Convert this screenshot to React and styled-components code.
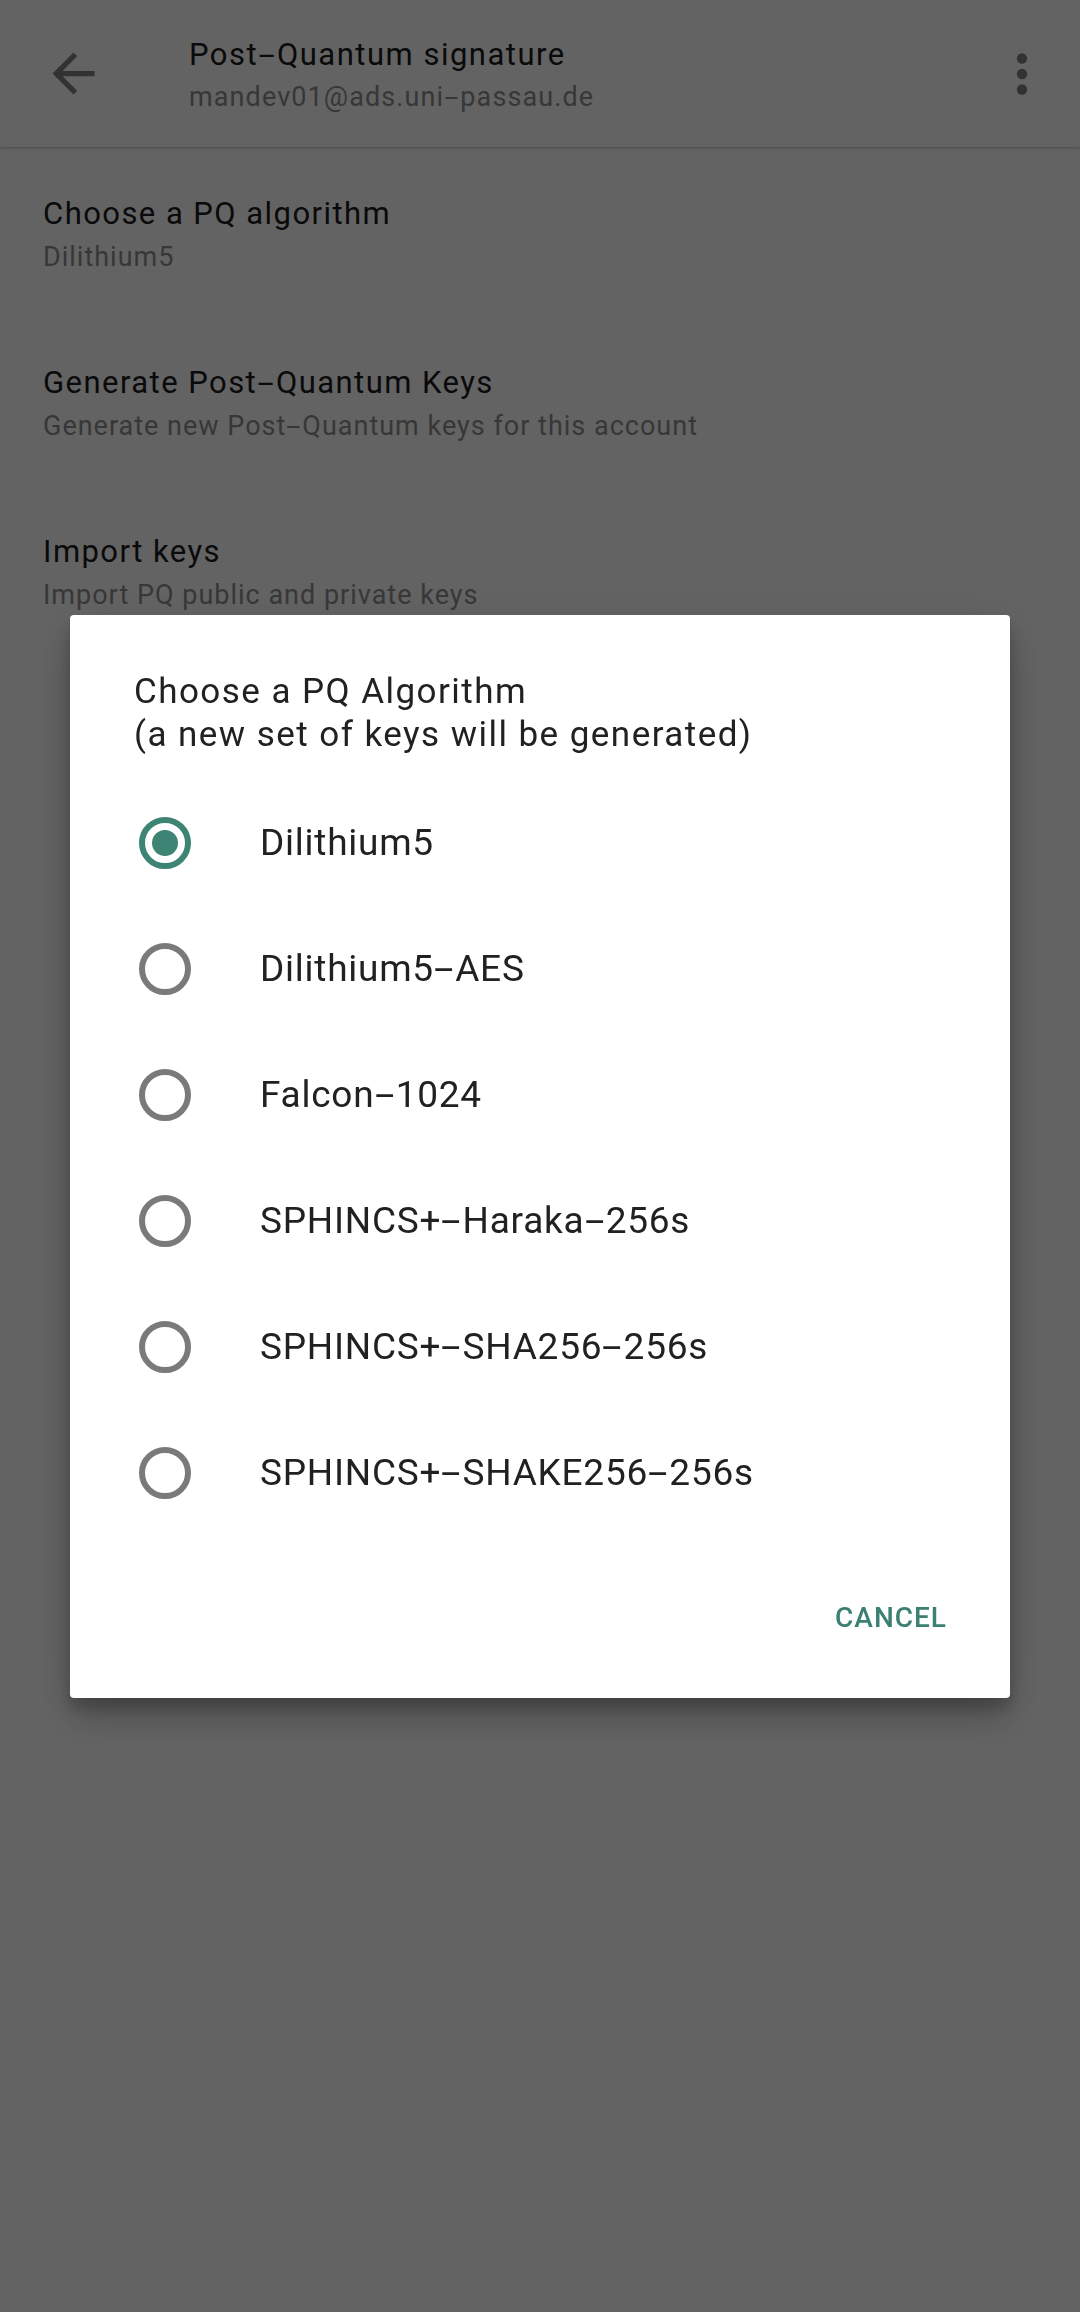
import React from "react";
import styled, { createGlobalStyle } from "styled-components";

const GlobalStyle = createGlobalStyle`
  html, body {
    margin: 0;
    padding: 0;
    background: #ffffff;
    font-family: Roboto, "Noto Sans", sans-serif;
  }
`;

const algorithms = [
  "Dilithium5",
  "Dilithium5-AES",
  "Falcon-1024",
  "SPHINCS+-Haraka-256s",
  "SPHINCS+-SHA256-256s",
  "SPHINCS+-SHAKE256-256s",
];

const settings = [
  { title: "Choose a PQ algorithm", summary: "Dilithium5" },
  {
    title: "Generate Post-Quantum Keys",
    summary: "Generate new Post-Quantum keys for this account",
  },
  { title: "Import keys", summary: "Import PQ public and private keys" },
];

// the device font draws "-" as a long dash, so widen it
function Dashed({ text }) {
  const parts = text.split("-");
  return parts.map((part, i) => (
    <React.Fragment key={i}>
      {i > 0 && <Dash>-</Dash>}
      {part}
    </React.Fragment>
  ));
}

export default function App() {
  return (
    <>
      <GlobalStyle />
      <Screen>
        <Toolbar>
          <IconSlot>
            <svg width="63" height="63" viewBox="0 0 24 24">
              <path
                fill="currentColor"
                d="M20 11H7.83l5.59-5.59L12 4l-8 8 8 8 1.41-1.41L7.83 13H20v-2z"
              />
            </svg>
          </IconSlot>
          <TitleBlock>
            <ToolbarTitle>
              <Dashed text="Post-Quantum signature" />
            </ToolbarTitle>
            <ToolbarSubtitle>
              <Dashed text="mandev01@ads.uni-passau.de" />
            </ToolbarSubtitle>
          </TitleBlock>
          <IconSlot>
            <svg width="62" height="62" viewBox="0 0 24 24">
              <circle cx="12" cy="6" r="2" fill="currentColor" />
              <circle cx="12" cy="12" r="2" fill="currentColor" />
              <circle cx="12" cy="18" r="2" fill="currentColor" />
            </svg>
          </IconSlot>
        </Toolbar>

        <SettingsList>
          {settings.map((s) => (
            <SettingItem key={s.title}>
              <SettingTitle>
                <Dashed text={s.title} />
              </SettingTitle>
              <SettingSummary>
                <Dashed text={s.summary} />
              </SettingSummary>
            </SettingItem>
          ))}
        </SettingsList>
      </Screen>

      <Scrim>
        <Dialog>
          <DialogTitle>
            Choose a PQ Algorithm
            <br />
            (a new set of keys will be generated)
          </DialogTitle>
          <Options>
            {algorithms.map((name, i) => (
              <Option key={name}>
                <Radio $checked={i === 0} />
                <OptionLabel>
                  <Dashed text={name} />
                </OptionLabel>
              </Option>
            ))}
          </Options>
          <Actions>
            <TextButton>CANCEL</TextButton>
          </Actions>
        </Dialog>
      </Scrim>
    </>
  );
}

const Dash = styled.span`
  display: inline-block;
  transform: scaleX(1.9);
  margin: 0 0.14em;
`;

/* page underneath */
const Screen = styled.div`
  min-height: 100vh;
  background: #ffffff;
`;

const Toolbar = styled.header`
  height: 147px;
  display: flex;
  align-items: center;
  padding: 0 27px 0 42px;
  box-sizing: border-box;
  background: #ffffff;
  box-shadow: 0 1px 3px rgba(0, 0, 0, 0.25);
  color: #808080;
`;

const IconSlot = styled.div`
  display: flex;
  align-items: center;
  justify-content: center;
`;

const TitleBlock = styled.div`
  flex: 1;
  margin-left: 84px;
  margin-top: 5px;
  display: flex;
  flex-direction: column;
`;

const ToolbarTitle = styled.div`
  font-size: 31px;
  line-height: 40px;
  letter-spacing: 1.5px;
  color: #1a1a1a;
`;

const ToolbarSubtitle = styled.div`
  margin-top: 2px;
  font-size: 27px;
  line-height: 40px;
  letter-spacing: 1.1px;
  color: #8f8f8f;
`;

const SettingsList = styled.div`
  display: flex;
  flex-direction: column;
`;

const SettingItem = styled.div`
  padding: 47px 43px 40px;
  display: flex;
  flex-direction: column;
`;

const SettingTitle = styled.div`
  font-size: 31px;
  line-height: 40px;
  letter-spacing: 1.45px;
  color: #1a1a1a;
`;

const SettingSummary = styled.div`
  margin-top: 4px;
  font-size: 27px;
  line-height: 38px;
  letter-spacing: 1px;
  color: #8f8f8f;
`;

/* dialog */
const Scrim = styled.div`
  position: fixed;
  inset: 0;
  background: rgba(0, 0, 0, 0.612);
  display: flex;
  align-items: center;
  justify-content: center;
`;

const Dialog = styled.div`
  width: 940px;
  background: #ffffff;
  border-radius: 4px;
  padding: 55px 0 38px;
  box-sizing: border-box;
  box-shadow: 0 24px 38px rgba(0, 0, 0, 0.14), 0 9px 46px rgba(0, 0, 0, 0.12),
    0 11px 15px rgba(0, 0, 0, 0.2);
`;

const DialogTitle = styled.div`
  padding: 0 64px;
  font-size: 35px;
  line-height: 43px;
  letter-spacing: 1.45px;
  color: #212121;
`;

const Options = styled.div`
  margin-top: 24px;
  display: flex;
  flex-direction: column;
`;

const Option = styled.div`
  height: 126px;
  display: flex;
  align-items: center;
  padding-left: 69px;
  gap: 69px;
`;

const Radio = styled.span`
  width: 52px;
  height: 52px;
  box-sizing: border-box;
  border-radius: 50%;
  border: 6px solid ${(p) => (p.$checked ? "#3d8475" : "#7a7a7a")};
  display: flex;
  align-items: center;
  justify-content: center;
  flex-shrink: 0;

  &::after {
    content: "";
    width: 26px;
    height: 26px;
    border-radius: 50%;
    background: #3d8475;
    display: ${(p) => (p.$checked ? "block" : "none")};
  }
`;

const OptionLabel = styled.span`
  font-size: 37px;
  letter-spacing: 0.75px;
  color: #212121;
`;

const Actions = styled.div`
  margin-top: 40px;
  display: flex;
  justify-content: flex-end;
  padding-right: 47px;
`;

const TextButton = styled.button`
  height: 84px;
  padding: 0 16px;
  border: none;
  background: transparent;
  font-family: Roboto, sans-serif;
  font-size: 28px;
  font-weight: 500;
  letter-spacing: 1px;
  color: #3b8072;
`;
